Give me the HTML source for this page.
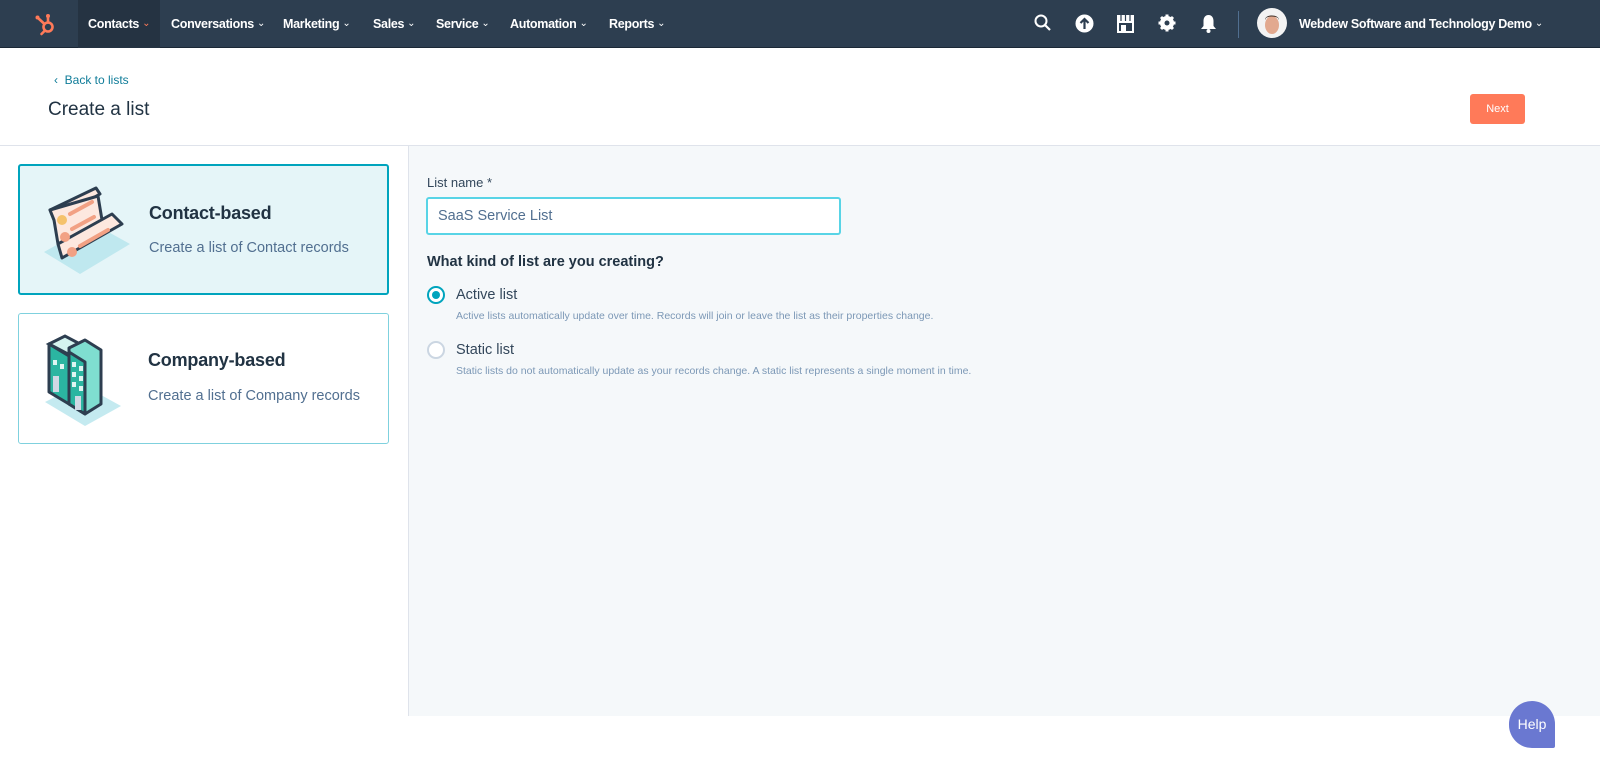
<!DOCTYPE html>
<html><head><meta charset="utf-8"><style>
*{box-sizing:border-box;margin:0;padding:0}
body{width:1600px;height:770px;overflow:hidden;font-family:"Liberation Sans",sans-serif;background:#fff;color:#33475b;position:relative}
.nav{position:absolute;left:0;top:0;width:1600px;height:48px;background:#2d3e50;border-bottom:1px solid #1b2836}
.nav .logo{position:absolute;left:34px;top:12px}
.nav .item{position:absolute;top:0;height:48px;line-height:48px;color:#fff;font-size:12.5px;font-weight:bold;letter-spacing:-0.3px}
.nav .item span{font-weight:normal;font-size:10px;margin-left:3px;position:relative;top:-2px}
.nav .active{background:#253342;left:78px;width:82px;padding-left:10px}
.ic{position:absolute;top:14px}
.hdr{position:absolute;left:0;top:49px;width:1600px;height:97px;border-bottom:1px solid #dfe3eb;background:#fff}
.back{position:absolute;left:54px;top:24px;font-size:12px;color:#0f7c99}
.title{position:absolute;left:48px;top:50px;font-size:19px;color:#213343}
.next{position:absolute;left:1470px;top:45px;width:55px;height:30px;background:#ff7a59;border-radius:3px;color:#fff;font-size:11px;display:flex;align-items:center;justify-content:center}
.left{position:absolute;left:0;top:146px;width:409px;height:570px;border-right:1px solid #dfe3eb;background:#fff}
.right{position:absolute;left:409px;top:146px;width:1191px;height:570px;background:#f5f8fa}
.card{position:absolute;left:18px;width:371px;height:131px;border:1px solid #7fd1de;border-radius:3px;background:#fff}
.card.sel{border:2px solid #00a4bd;background:#e5f5f8}
.card h3{position:absolute;left:129px;font-size:18px;font-weight:bold;color:#213343;letter-spacing:-0.2px}
.card p{position:absolute;left:129px;font-size:14.5px;color:#516f90}
.lbl{position:absolute;left:427px;top:175px;font-size:13px;color:#33475b}
.inp{position:absolute;left:426px;top:197px;width:415px;height:38px;border:2px solid #58d4e6;border-radius:3px;background:#fff;font-size:14.5px;color:#516f90;padding-left:10px;line-height:34px}
.q{position:absolute;left:427px;top:254px;font-size:14.5px;font-weight:bold;color:#213343}
.radio{position:absolute;left:427px;width:18px;height:18px;border-radius:50%;border:2px solid #00a4bd;background:#fff}
.rt{position:absolute;left:456px;font-size:14.5px;color:#33475b}
.rd{position:absolute;left:456px;font-size:10.5px;color:#7c98b6}
.help{position:absolute;left:1509px;top:701px;width:46px;height:47px;background:#6a78d1;border-radius:23px 23px 2px 23px;color:#fff;font-size:14px;text-align:center;line-height:47px}
</style></head><body>
<div class="nav">
 <svg class="logo" width="26" height="26" viewBox="0 0 26 26"><g fill="none" stroke="#ff7a59" stroke-width="2.6" stroke-linecap="round"><circle cx="14" cy="15" r="4.5"/><line x1="14" y1="10.5" x2="14" y2="5"/><line x1="10.5" y1="12" x2="4" y2="6"/><line x1="11" y1="18.5" x2="7.5" y2="22"/></g><circle cx="14" cy="4" r="2" fill="#ff7a59"/><circle cx="3.5" cy="5.5" r="2" fill="#ff7a59"/></svg>
 <div class="item active">Contacts<span style="color:#ff7a59">⌄</span></div>
 <div class="item" style="left:171px">Conversations<span>⌄</span></div>
 <div class="item" style="left:283px">Marketing<span>⌄</span></div>
 <div class="item" style="left:373px">Sales<span>⌄</span></div>
 <div class="item" style="left:436px">Service<span>⌄</span></div>
 <div class="item" style="left:510px">Automation<span>⌄</span></div>
 <div class="item" style="left:609px">Reports<span>⌄</span></div>
 <svg class="ic" style="left:1034px" width="18" height="18" viewBox="0 0 18 18"><circle cx="7" cy="7" r="5.5" fill="none" stroke="#fff" stroke-width="2"/><line x1="11" y1="11" x2="16" y2="16" stroke="#fff" stroke-width="2.2"/></svg>
 <svg class="ic" style="left:1075px" width="19" height="19" viewBox="0 0 19 19"><circle cx="9.5" cy="9.5" r="9" fill="#fff"/><path d="M9.5 15V5M5.5 9l4-4 4 4" stroke="#2d3e50" stroke-width="2.2" fill="none"/></svg>
 <svg class="ic" style="left:1116px" width="19" height="19" viewBox="0 0 19 19"><rect x="1" y="1" width="17" height="6" fill="#fff"/><path d="M5 1v6M9.5 1v6M14 1v6" stroke="#2d3e50" stroke-width="1.2"/><rect x="2" y="8" width="15" height="10" fill="none" stroke="#fff" stroke-width="2"/><rect x="5" y="11" width="5" height="7" fill="#fff"/></svg>
 <svg class="ic" style="left:1158px" width="18" height="18" viewBox="0 0 18 18"><circle cx="9" cy="9" r="5.5" fill="none" stroke="#fff" stroke-width="3"/><g stroke="#fff" stroke-width="3"><line x1="9" y1="0.5" x2="9" y2="17.5"/><line x1="0.5" y1="9" x2="17.5" y2="9"/><line x1="3" y1="3" x2="15" y2="15"/><line x1="15" y1="3" x2="3" y2="15"/></g><circle cx="9" cy="9" r="2.5" fill="#2d3e50"/></svg>
 <svg class="ic" style="left:1200px" width="17" height="19" viewBox="0 0 17 19"><path d="M8.5 1C5 1 3.5 4 3.5 7v5L1 15h15l-2.5-3V7C13.5 4 12 1 8.5 1z" fill="#fff"/><circle cx="8.5" cy="17" r="2" fill="#fff"/></svg>
 <div style="position:absolute;left:1238px;top:11px;width:1px;height:27px;background:#516f90"></div>
 <svg style="position:absolute;left:1257px;top:8px" width="30" height="30" viewBox="0 0 30 30"><circle cx="15" cy="15" r="15" fill="#f3f3f3"/><ellipse cx="15" cy="17" rx="7" ry="9" fill="#e2a98f"/><path d="M8 12c0-6 14-6 14 0l-1-2c-3-2-9-2-12 0z" fill="#3a2a22"/></svg>
 <div class="item" style="left:1299px">Webdew Software and Technology Demo<span>⌄</span></div>
</div>
<div class="hdr">
 <div class="back">‹&nbsp;&nbsp;Back to lists</div>
 <div class="title">Create a list</div>
 <div class="next">Next</div>
</div>
<div class="left"></div>
<div class="right"></div>
<div class="card sel" style="top:164px">
 <svg style="position:absolute;left:20px;top:16px" width="90" height="96" viewBox="0 0 90 96">
  <path d="M4 70l36 22 50-30-36-20z" fill="#b5e5ec" opacity=".8"/>
  <path d="M10 28L56 6l4 6-46 26z" fill="#fde8df" stroke="#2d3e50" stroke-width="3" stroke-linejoin="round"/>
  <path d="M10 28l4 10 4 24 44-24-4-24z" fill="#fde8df" stroke="#2d3e50" stroke-width="3" stroke-linejoin="round"/>
  <path d="M18 62l4 14 60-34-10-10z" fill="#fde8df" stroke="#2d3e50" stroke-width="3" stroke-linejoin="round"/>
  <circle cx="22" cy="38" r="5" fill="#f5c26b"/><circle cx="25" cy="55" r="5" fill="#f2a184"/><circle cx="32" cy="70" r="5" fill="#f2a184"/>
  <path d="M30 32l22-12M32 47l22-12M40 64l28-16" stroke="#f2a184" stroke-width="4" stroke-linecap="round"/>
 </svg>
 <h3 style="top:37px">Contact-based</h3>
 <p style="top:74px">Create a list of Contact records</p>
</div>
<div class="card" style="top:313px">
 <svg style="position:absolute;left:24px;top:16px" width="80" height="96" viewBox="0 0 80 96">
  <path d="M2 72l40 24 36-20-40-22z" fill="#b5e5ec" opacity=".8"/>
  <path d="M6 14l16-8 34 18-16 8z" fill="#d5f4ef" stroke="#2d3e50" stroke-width="3"/>
  <path d="M6 14v48l20 12V26z" fill="#2bb5a1" stroke="#2d3e50" stroke-width="3" stroke-linejoin="round"/>
  <path d="M26 18l16-8 16 10v54l-16 10-16-10z" fill="#7fded0" stroke="#2d3e50" stroke-width="3" stroke-linejoin="round"/>
  <path d="M26 22l16 10v52L26 74z" fill="#2bb5a1" stroke="#2d3e50" stroke-width="3" stroke-linejoin="round"/>
  <g fill="#dff5f2"><rect x="29" y="32" width="4" height="5"/><rect x="36" y="36" width="4" height="5"/><rect x="29" y="42" width="4" height="5"/><rect x="36" y="46" width="4" height="5"/><rect x="29" y="52" width="4" height="5"/><rect x="36" y="56" width="4" height="5"/><rect x="10" y="30" width="4" height="5"/><rect x="17" y="34" width="4" height="5"/><rect x="10" y="46" width="6" height="16" fill="#cfd8e4"/><rect x="32" y="66" width="6" height="14" fill="#cfd8e4"/></g>
 </svg>
 <h3 style="top:36px">Company-based</h3>
 <p style="top:74px">Create a list of Company records</p>
</div>
<div class="lbl">List name *</div>
<div class="inp">SaaS Service List</div>
<div class="q">What kind of list are you creating?</div>
<div class="radio" style="top:286px"><div style="position:absolute;left:3px;top:3px;width:8px;height:8px;border-radius:50%;background:#00a4bd"></div></div>
<div class="rt" style="top:287px">Active list</div>
<div class="rd" style="top:310px">Active lists automatically update over time. Records will join or leave the list as their properties change.</div>
<div class="radio" style="top:341px;border-color:#cbd6e2"></div>
<div class="rt" style="top:342px">Static list</div>
<div class="rd" style="top:365px">Static lists do not automatically update as your records change. A static list represents a single moment in time.</div>
<div class="help">Help</div>
</body></html>
